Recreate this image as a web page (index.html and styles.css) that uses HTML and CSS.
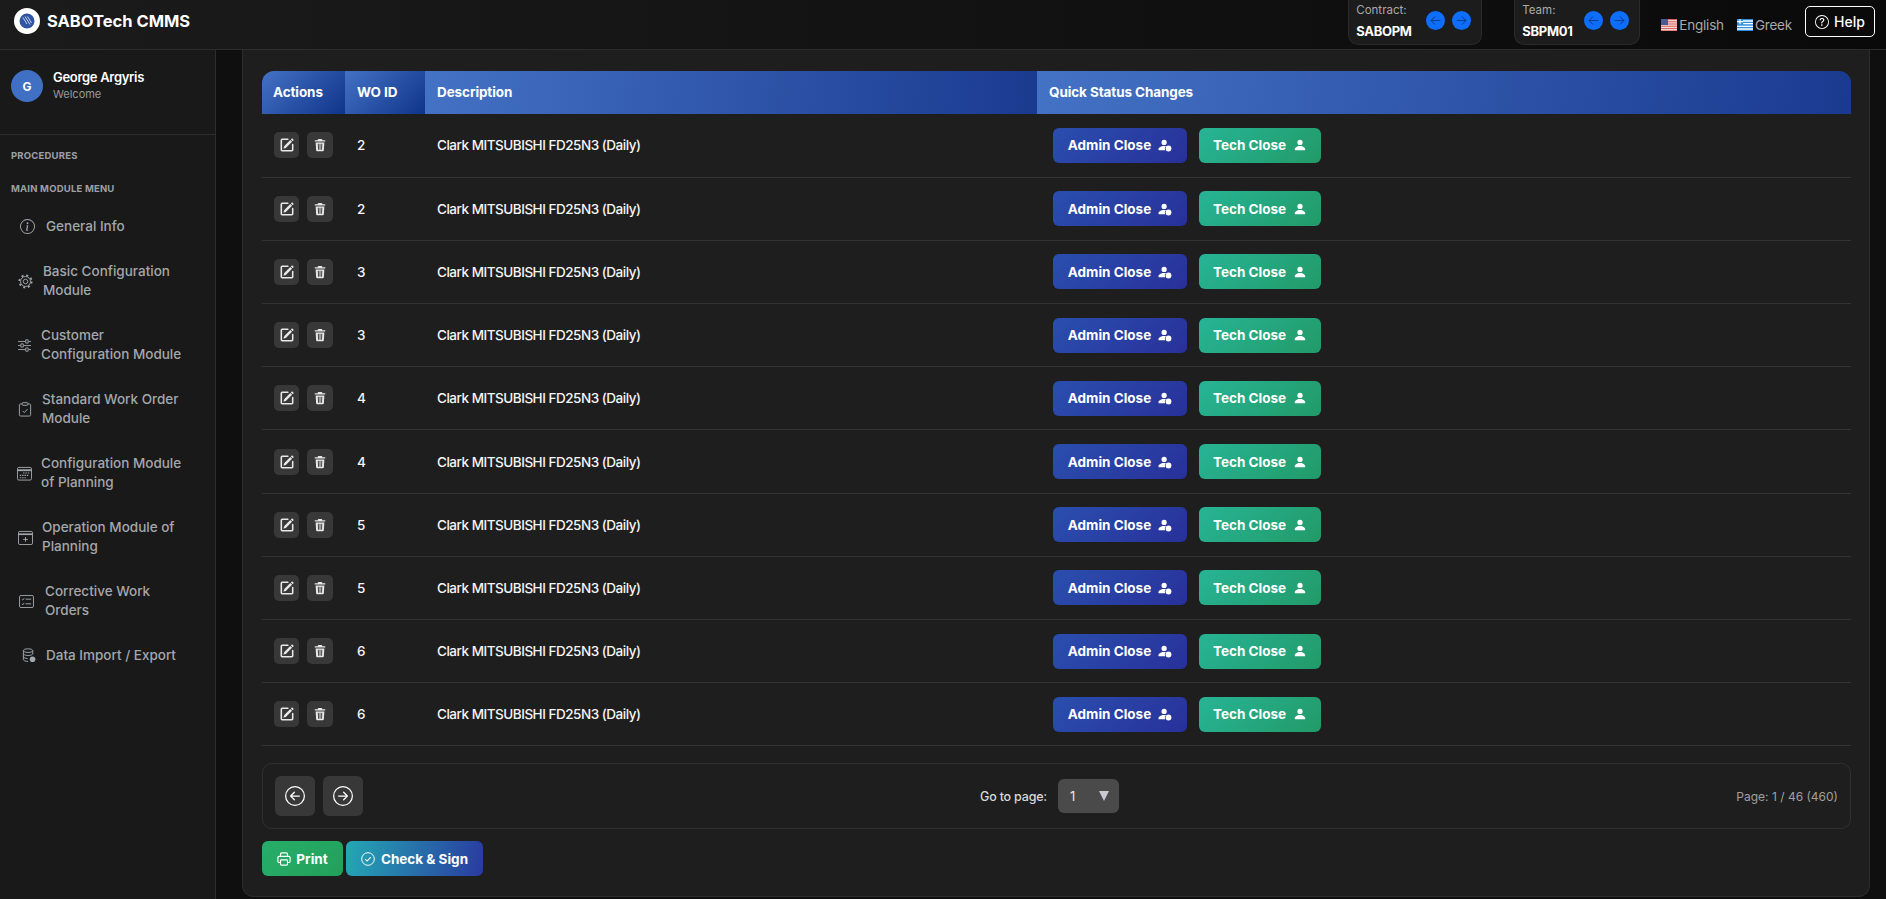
FILE: index.html
```html
<!DOCTYPE html>
<html lang="en">
<head>
    <meta charset="UTF-8">
    <title>SABOTech CMMS</title>
    <link rel="stylesheet" href="styles.css">
</head>
<body>
    <svg class="defs" width="0" height="0">
        <symbol id="i-edit" viewBox="0 0 16 16"><path d="M15.502 1.94a.5.5 0 0 1 0 .706L14.459 3.69l-2-2L13.502.646a.5.5 0 0 1 .707 0l1.293 1.293zm-1.75 2.456-2-2L4.939 9.21a.5.5 0 0 0-.121.196l-.805 2.414a.25.25 0 0 0 .316.316l2.414-.805a.5.5 0 0 0 .196-.12l6.813-6.814z"/><path d="M.6 13.500A1.900 1.900 0 0 0 2.500 15.400h11a1.900 1.900 0 0 0 1.900-1.900v-6a.9.9 0 0 0-1.800 0v6a.1.1 0 0 1-.1.1h-11a.1.1 0 0 1-.1-.1v-11a.1.1 0 0 1 .1-.1H9a.9.9 0 0 0 0-1.800H2.500A1.900 1.900 0 0 0 .6 2.500v11z"/></symbol>
        <symbol id="i-trash" viewBox="0 0 16 16"><path fill-rule="evenodd" d="M2 2.500h3.500V1.600c0-.4.3-.6.6-.6h3.800c.3 0 .6.2.6.6v.9H14v1.400H2zM3 5h10l-.6 9c0 .6-.5 1-1 1H4.600c-.5 0-1-.4-1-1zm2.500 1.500.3 7h1l-.2-7zm2 0v7h1v-7zm2 0-.2 7h1l.3-7z"/></symbol>
        <symbol id="i-person" viewBox="0 0 16 16"><path d="M3 14s-1 0-1-1 1-4 6-4 6 3 6 4-1 1-1 1H3Zm5-6a3 3 0 1 0 0-6 3 3 0 0 0 0 6Z"/></symbol>
        <symbol id="i-person-dot" viewBox="0 0 16 16"><path d="M7 8a3 3 0 1 0 0-6 3 3 0 0 0 0 6ZM1.500 14s-1 0-1-1 1-4 6.500-4c.8 0 1.500.1 2.100.2A4 4 0 0 0 8.200 14Z"/><circle cx="12" cy="12" r="3.300"/></symbol>
        <symbol id="i-left" viewBox="0 0 16 16"><path d="M1 8a7 7 0 1 0 14 0A7 7 0 0 0 1 8zm15 0A8 8 0 1 1 0 8a8 8 0 0 1 16 0zm-4.500-.5a.5.5 0 0 1 0 1H5.707l2.147 2.146a.5.5 0 0 1-.708.708l-3-3a.5.5 0 0 1 0-.708l3-3a.5.5 0 1 1 .708.708L5.707 7.500H11.500z"/></symbol>
        <symbol id="i-right" viewBox="0 0 16 16"><path d="M1 8a7 7 0 1 0 14 0A7 7 0 0 0 1 8zm15 0A8 8 0 1 1 0 8a8 8 0 0 1 16 0zM4.500 7.500a.5.5 0 0 0 0 1h5.793l-2.147 2.146a.5.5 0 0 0 .708.708l3-3a.5.5 0 0 0 0-.708l-3-3a.5.5 0 1 0-.708.708L10.293 7.500H4.500z"/></symbol>
        <symbol id="i-arrow-left" viewBox="0 0 16 16"><path d="M14 8H2.500M7.500 3 2.500 8l5 5" fill="none" stroke="currentColor" stroke-width="1"/></symbol>
        <symbol id="i-arrow-right" viewBox="0 0 16 16"><path d="M2 8h11.500M8.500 3l5 5-5 5" fill="none" stroke="currentColor" stroke-width="1"/></symbol>
    </svg>

    <header class="topbar">
        <div class="brand">
            <span class="logo">
                <svg viewBox="0 0 26 26" width="26" height="26">
                    <circle cx="13" cy="13" r="13" fill="#fff"/>
                    <circle cx="13" cy="13" r="7.500" fill="#2f55a4"/>
                    <path d="M9 9.500l4 6.500M11 8.500l5 8M13.500 8.500l4 6.500" stroke="#c5d3ee" stroke-width="1" fill="none"/>
                </svg>
            </span>
            <span class="brand-name">SABOTech CMMS</span>
        </div>

        <div class="top-right">
            <div class="picker picker-contract">
                <div>
                    <div class="picker-label">Contract:</div>
                    <div class="picker-value">SABOPM</div>
                </div>
                <div class="picker-arrows">
                    <span class="round-btn"><svg width="13" height="13"><use href="#i-arrow-left"/></svg></span>
                    <span class="round-btn"><svg width="13" height="13"><use href="#i-arrow-right"/></svg></span>
                </div>
            </div>
            <div class="picker picker-team">
                <div>
                    <div class="picker-label">Team:</div>
                    <div class="picker-value">SBPM01</div>
                </div>
                <div class="picker-arrows">
                    <span class="round-btn"><svg width="13" height="13"><use href="#i-arrow-left"/></svg></span>
                    <span class="round-btn"><svg width="13" height="13"><use href="#i-arrow-right"/></svg></span>
                </div>
            </div>
            <span class="lang">
                <svg class="flag" viewBox="0 0 16 12" width="16" height="12">
                    <rect width="16" height="12" fill="#f3f3f3"/>
                    <path d="M0 .5h16M0 2.300h16M0 4.100h16M0 5.900h16M0 7.700h16M0 9.500h16M0 11.300h16" stroke="#d9534f" stroke-width=".9"/>
                    <rect width="7" height="6" fill="#4a5a94"/>
                </svg>
                English
            </span>
            <span class="lang">
                <svg class="flag" viewBox="0 0 16 12" width="16" height="12">
                    <rect width="16" height="12" fill="#2d8fe0"/>
                    <path d="M6 2h10M6 4.700h10M0 7.300h16M0 10h16" stroke="#fff" stroke-width="1.300"/>
                    <path d="M0 2.600h6M3 0v5.300" stroke="#fff" stroke-width="1.200"/>
                </svg>
                Greek
            </span>
            <a class="help-btn">
                <svg width="14" height="14" viewBox="0 0 16 16" fill="currentColor"><path d="M8 15A7 7 0 1 1 8 1a7 7 0 0 1 0 14zm0 1A8 8 0 1 0 8 0a8 8 0 0 0 0 16z"/><path d="M5.255 5.786a.237.237 0 0 0 .241.247h.825c.138 0 .248-.113.266-.25.09-.656.54-1.134 1.342-1.134.686 0 1.314.343 1.314 1.168 0 .635-.374.927-.965 1.371-.673.489-1.206 1.06-1.168 1.987l.003.217a.25.25 0 0 0 .25.246h.811a.25.25 0 0 0 .25-.25v-.105c0-.718.273-.927 1.01-1.486.609-.463 1.244-.977 1.244-2.056 0-1.511-1.276-2.241-2.673-2.241-1.267 0-2.655.59-2.75 2.286zm1.557 5.763c0 .533.425.927 1.01.927.609 0 1.028-.394 1.028-.927 0-.552-.42-.94-1.029-.94-.584 0-1.009.388-1.009.94z"/></svg>
                Help
            </a>
        </div>
    </header>

    <div class="layout">
        <aside class="sidebar">
            <div class="user">
                <span class="avatar">G</span>
                <div>
                    <div class="user-name">George Argyris</div>
                    <div class="user-role">Welcome</div>
                </div>
            </div>
            <div class="side-heading side-heading-first">PROCEDURES</div>
            <div class="side-heading">MAIN MODULE MENU</div>
            <nav class="nav">
                <a class="nav-item nav-info">
                    <svg width="15" height="15" viewBox="0 0 16 16" fill="currentColor"><path d="M8 15A7 7 0 1 1 8 1a7 7 0 0 1 0 14zm0 1A8 8 0 1 0 8 0a8 8 0 0 0 0 16z"/><path d="m8.930 6.588-2.290.287-.082.380.450.083c.294.070.352.176.288.469l-.738 3.468c-.194.897.105 1.319.808 1.319.545 0 1.178-.252 1.465-.598l.088-.416c-.2.176-.492.246-.686.246-.275 0-.375-.193-.304-.533L8.930 6.588zM9 4.500a1 1 0 1 1-2 0 1 1 0 0 1 2 0z"/></svg>
                    <span>General Info</span>
                </a>
                <a class="nav-item nav-basic">
                    <svg width="15" height="15" viewBox="0 0 16 16" fill="none" stroke="currentColor"><circle cx="8" cy="8" r="2.400"/><circle cx="8" cy="8" r="5.300"/><circle cx="8" cy="8" r="6.600" stroke-width="1.800" stroke-dasharray="2.200 2.980"/></svg>
                    <span>Basic Configuration Module</span>
                </a>
                <a class="nav-item nav-customer">
                    <svg width="13" height="13" viewBox="0 0 16 16" fill="none" stroke="currentColor" stroke-width="1.100"><path d="M0 3h9M13 3h3M0 8h3M7 8h9M0 13h9M13 13h3"/><path d="M9.500 1v4h3V1zM3.500 6v4h3V6zM9.500 11v4h3v-4z"/></svg>
                    <span>Customer Configuration Module</span>
                </a>
                <a class="nav-item nav-standard">
                    <svg width="14" height="15" viewBox="0 0 14 16" fill="none" stroke="currentColor" stroke-width="1"><path d="M4 2H2.500A1.500 1.500 0 0 0 1 3.500v10A1.500 1.500 0 0 0 2.500 15h9a1.500 1.500 0 0 0 1.500-1.500v-10A1.500 1.500 0 0 0 11.500 2H10"/><rect x="4" y=".7" width="6" height="2.800" rx=".8"/><path d="M4.500 9.500 6.300 11.300 9.700 7.500"/></svg>
                    <span>Standard Work Order Module</span>
                </a>
                <a class="nav-item nav-config">
                    <svg width="15" height="15" viewBox="0 0 16 16" fill="none" stroke="currentColor" stroke-width="1"><rect x=".5" y="1.500" width="15" height="13.500" rx="1.500"/><path d="M.5 4.500h15" stroke-width="2"/><path d="M6.500 7.500h1.500M9 7.500h1.500M11.500 7.500H13M3 10h1.500M5.500 10H7M8 10h1.500M10.500 10H12M3 12.500h1.500M5.500 12.500H7M8 12.500h1.500" stroke-width="1.200"/></svg>
                    <span>Configuration Module of Planning</span>
                </a>
                <a class="nav-item nav-operation">
                    <svg width="15" height="15" viewBox="0 0 16 16" fill="none" stroke="currentColor" stroke-width="1"><rect x=".5" y="1.500" width="15" height="14" rx="1.500"/><path d="M.5 4.500h15" stroke-width="1.800"/><path d="M8 7.500v5M5.500 10h5"/></svg>
                    <span>Operation Module of Planning</span>
                </a>
                <a class="nav-item nav-corrective">
                    <svg width="15" height="13" viewBox="0 0 16 14" fill="none" stroke="currentColor" stroke-width="1"><rect x=".5" y=".5" width="15" height="13" rx="1.500"/><path d="M7 4.500h6M7 9.500h6M3 4.500l1 1 1.500-2M3 9.500l1 1 1.500-2"/></svg>
                    <span>Corrective Work Orders</span>
                </a>
                <a class="nav-item nav-data">
                    <svg width="14" height="15" viewBox="0 0 14 16" fill="none" stroke="currentColor" stroke-width="1"><ellipse cx="6" cy="2.800" rx="5" ry="2"/><path d="M1 2.800v9.500c0 1.100 2.200 2 5 2M11 2.800v3.500M1 6c0 1.100 2.200 2 5 2s5-.9 5-2M1 9.200c0 1.100 2.200 2 4.500 2"/><circle cx="10.800" cy="12" r="3" fill="currentColor" stroke="none"/></svg>
                    <span>Data Import / Export</span>
                </a>
            </nav>
        </aside>

        <main class="main">
            <section class="panel">
                <table class="wo-table">
                    <colgroup>
                        <col class="col-actions">
                        <col class="col-id">
                        <col class="col-desc">
                        <col>
                    </colgroup>
                    <thead>
                        <tr>
                            <th class="th-actions">Actions</th>
                            <th class="th-id">WO ID</th>
                            <th>Description</th>
                            <th class="th-status">Quick Status Changes</th>
                        </tr>
                    </thead>
                    <tbody id="rows"></tbody>
                </table>

                <div class="pager">
                    <div class="pager-nav">
                        <button class="page-btn"><svg width="20" height="20" fill="currentColor"><use href="#i-left"/></svg></button>
                        <button class="page-btn"><svg width="20" height="20" fill="currentColor"><use href="#i-right"/></svg></button>
                    </div>
                    <div class="pager-goto">
                        <span class="goto-label">Go to page:</span>
                        <span class="goto-select">1<span class="caret"></span></span>
                    </div>
                    <div class="pager-info">Page: 1 / 46 (460)</div>
                </div>

                <div class="bottom-actions">
                    <button class="btn btn-print">
                        <svg width="14" height="14" viewBox="0 0 16 16" fill="none" stroke="currentColor" stroke-width="1.300"><path d="M4 5V2.500A1.500 1.500 0 0 1 5.500 1h5A1.500 1.500 0 0 1 12 2.500V5"/><path d="M4 12H2.500A1.500 1.500 0 0 1 1 10.500v-4A1.500 1.500 0 0 1 2.500 5h11A1.500 1.500 0 0 1 15 6.500v4a1.500 1.500 0 0 1-1.500 1.500H12"/><rect x="4" y="9" width="8" height="6" rx="1"/></svg>
                        Print
                    </button>
                    <button class="btn btn-check">
                        <svg width="14" height="14" viewBox="0 0 16 16" fill="none" stroke="currentColor" stroke-width="1.100"><circle cx="8" cy="8" r="7.200"/><path d="M4.800 8.200 7 10.400l4.200-4.600" stroke-width="1.200"/></svg>
                        Check &amp; Sign
                    </button>
                </div>
            </section>
        </main>
    </div>

    <script src="rows.js"></script>
</body>
</html>
```

FILE: rows.js
```js
const ids = [2, 2, 3, 3, 4, 4, 5, 5, 6, 6];

document.getElementById('rows').innerHTML = ids.map(id => `
    <tr>
        <td>
            <div class="row-actions">
                <button class="icon-btn"><svg width="14" height="14" fill="currentColor"><use href="#i-edit"/></svg></button>
                <button class="icon-btn icon-btn-wide"><svg width="14" height="14" fill="currentColor"><use href="#i-trash"/></svg></button>
            </div>
        </td>
        <td>${id}</td>
        <td>Clark MITSUBISHI FD25N3 (Daily)</td>
        <td>
            <div class="row-status">
                <button class="btn btn-admin">Admin Close <svg width="14" height="14" fill="currentColor"><use href="#i-person-dot"/></svg></button>
                <button class="btn btn-tech">Tech Close <svg width="14" height="14" fill="currentColor"><use href="#i-person"/></svg></button>
            </div>
        </td>
    </tr>`).join('');
```

FILE: styles.css
```css
* {
    box-sizing: border-box;
}

html, body {
    height: 100%;
}

body {
    margin: 0;
    overflow: hidden;
    background: #0f0f0f;
    color: #fff;
    font-family: Inter, "Noto Sans", sans-serif;
    font-size: 14px;
}

button {
    font-family: inherit;
    border: 0;
    color: inherit;
}

.defs {
    position: absolute;
}

/* top bar */
.topbar {
    height: 50px;
    display: flex;
    align-items: center;
    justify-content: space-between;
    padding: 0 11px 0 14px;
    background: linear-gradient(90deg, #1b1b1b 0%, #0a0a0a 100%);
    border-bottom: 1px solid #2d2d2d;
}

.brand {
    display: flex;
    align-items: center;
    gap: 7px;
    margin-top: -7px;
}

.logo {
    display: flex;
}

.brand-name {
    font-size: 16.5px;
    font-weight: 700;
}

.top-right {
    display: flex;
    align-items: center;
    height: 100%;
}

.picker {
    display: flex;
    justify-content: space-between;
    align-self: flex-start;
    height: 45px;
    padding: 3px 10px 0 7px;
    background: #1c1c1c;
    border: 1px solid #2a2a2a;
    border-top: 0;
    border-radius: 0 0 10px 10px;
}

.picker-contract {
    width: 134px;
    margin-right: 32px;
}

.picker-team {
    width: 126px;
    margin-right: 21px;
}

.picker-label {
    font-size: 11.5px;
    color: #aaa;
    line-height: 14px;
}

.picker-value {
    font-size: 13px;
    font-weight: 700;
    letter-spacing: -.3px;
    margin-top: 6px;
    line-height: 16px;
}

.picker-arrows {
    display: flex;
    gap: 7px;
    margin-top: 8px;
}

.round-btn {
    width: 19px;
    height: 19px;
    display: flex;
    align-items: center;
    justify-content: center;
    border-radius: 50%;
    background: #0d6efd;
    color: #08306e;
}

.lang {
    display: flex;
    align-items: center;
    gap: 2px;
    font-size: 13.5px;
    letter-spacing: -.2px;
    color: #a8a8a8;
    margin-right: 13px;
}

.help-btn {
    display: flex;
    align-items: center;
    gap: 5px;
    width: 70px;
    height: 31px;
    margin-top: -6px;
    justify-content: center;
    border: 1px solid #fff;
    border-radius: 5px;
    font-size: 14px;
    font-weight: 500;
}

/* sidebar */
.layout {
    display: flex;
    height: 849px;
}

.sidebar {
    width: 216px;
    flex-shrink: 0;
    background: #191919;
    border-right: 1px solid #2d2d2d;
}

.user {
    display: flex;
    gap: 10px;
    height: 85px;
    padding: 19px 0 0 11px;
    border-bottom: 1px solid #2d2d2d;
}

.avatar {
    width: 32px;
    height: 32px;
    margin-top: 1px;
    display: flex;
    align-items: center;
    justify-content: center;
    border-radius: 50%;
    background: #4070c4;
    font-size: 12px;
    font-weight: 700;
}

.user-name {
    font-size: 13px;
    font-weight: 600;
    letter-spacing: -.3px;
    line-height: 16px;
}

.user-role {
    font-size: 11px;
    color: #9a9a9a;
    line-height: 18px;
}

.side-heading {
    font-size: 9.5px;
    font-weight: 700;
    color: #9ca0a6;
    padding-left: 11px;
    line-height: 12px;
    margin-top: 21px;
    letter-spacing: .2px;
}

.side-heading-first {
    margin-top: 15px;
}

.nav {
    margin-top: 17px;
}

.nav-item {
    display: flex;
    align-items: center;
    height: 64px;
    font-size: 13.5px;
    font-weight: 500;
    line-height: 19px;
    color: #a4a7ac;
}

.nav-item svg {
    flex-shrink: 0;
}

.nav-info { height: 28px; padding-left: 20px; gap: 11px; margin-bottom: 9px; }
.nav-basic { padding-left: 18px; gap: 10px; padding-right: 30px; }
.nav-customer { padding-left: 18px; gap: 10px; padding-right: 25px; }
.nav-standard { padding-left: 18px; gap: 10px; padding-right: 25px; }
.nav-config { padding-left: 17px; gap: 9px; padding-right: 25px; }
.nav-operation { padding-left: 18px; gap: 9px; padding-right: 25px; }
.nav-corrective { padding-left: 19px; gap: 11px; padding-right: 40px; }
.nav-data { height: 28px; padding-left: 22px; gap: 10px; margin-top: 8px; }

/* main panel */
.main {
    flex: 1;
    padding: 0 16px 2px 26px;
}

.panel {
    height: 100%;
    padding: 21px 18px 0 19px;
    background: #1e1e1e;
    border: 1px solid #2c2c2c;
    border-top: 0;
    border-radius: 0 0 12px 12px;
}

.wo-table {
    width: 100%;
    border-collapse: collapse;
    table-layout: fixed;
}

.col-actions { width: 83px; }
.col-id { width: 80px; }
.col-desc { width: 612px; }

.wo-table th {
    height: 43px;
    padding: 0 12px 2px 12px;
    text-align: left;
    font-size: 13.5px;
    font-weight: 700;
    letter-spacing: -.1px;
    background: linear-gradient(100deg, #4472c4 0%, #1a3a90 100%);
}

.wo-table th.th-actions,
.wo-table th.th-id {
    background: linear-gradient(135deg, #4472c4 0%, #0f348a 100%);
}

.wo-table th.th-actions {
    padding-left: 11px;
    border-top-left-radius: 12px;
}

.th-status {
    border-top-right-radius: 12px;
}

.wo-table td {
    height: 63.2px;
    padding: 0 12px;
    font-size: 13.5px;
    font-weight: 500;
    letter-spacing: -.48px;
    color: #f5f5f5;
    border-bottom: 1px solid #333;
}

.row-actions {
    display: flex;
    gap: 8px;
}

.icon-btn {
    width: 25px;
    height: 26px;
    padding: 0;
    display: flex;
    align-items: center;
    justify-content: center;
    border-radius: 5px;
    background: #383838;
    color: #e8e8e8;
}

.icon-btn-wide {
    width: 26px;
}

.row-status {
    display: flex;
    gap: 12px;
    padding-left: 4px;
}

.btn {
    height: 35px;
    display: flex;
    align-items: center;
    justify-content: center;
    gap: 7px;
    padding: 0;
    border-radius: 6px;
    font-size: 13.5px;
    font-weight: 700;
    letter-spacing: 0;
    color: #fff;
}

.btn-admin {
    width: 134px;
    background: linear-gradient(135deg, #2a4fae 0%, #28309a 100%);
}

.btn-tech {
    width: 122px;
    background: linear-gradient(135deg, #27b495 0%, #229a68 100%);
}

.pager {
    display: grid;
    grid-template-columns: 1fr auto 1fr;
    align-items: center;
    height: 66px;
    margin-top: 17px;
    padding: 0 12px;
    border: 1px solid #303030;
    border-radius: 10px;
}

.pager-nav {
    display: flex;
    gap: 8px;
}

.page-btn {
    width: 40px;
    height: 40px;
    display: flex;
    align-items: center;
    justify-content: center;
    padding: 0;
    border-radius: 6px;
    background: #383838;
}

.pager-goto {
    display: flex;
    align-items: center;
    gap: 11px;
    margin-right: 14px;
}

.goto-label {
    font-size: 12.5px;
    font-weight: 500;
    letter-spacing: -.2px;
    color: #d8d8d8;
}

.goto-select {
    width: 61px;
    height: 34px;
    display: flex;
    align-items: center;
    justify-content: space-between;
    padding: 0 10px 0 12px;
    border-radius: 6px;
    background: #4a4a4a;
    font-size: 13px;
    color: #e8e8e8;
}

.caret {
    width: 0;
    height: 0;
    border-left: 5.500px solid transparent;
    border-right: 5.500px solid transparent;
    border-top: 10px solid #c9c9d2;
}

.pager-info {
    text-align: right;
    font-size: 12px;
    color: #a0a0a0;
}

.bottom-actions {
    display: flex;
    gap: 3px;
    margin-top: 12px;
}

.btn-print {
    width: 81px;
    gap: 5px;
    background: linear-gradient(135deg, #27ae6a 0%, #22a05a 100%);
}

.btn-check {
    width: 137px;
    gap: 6px;
    background: linear-gradient(100deg, #24a8b4 0%, #2a3aa0 100%);
}
```
